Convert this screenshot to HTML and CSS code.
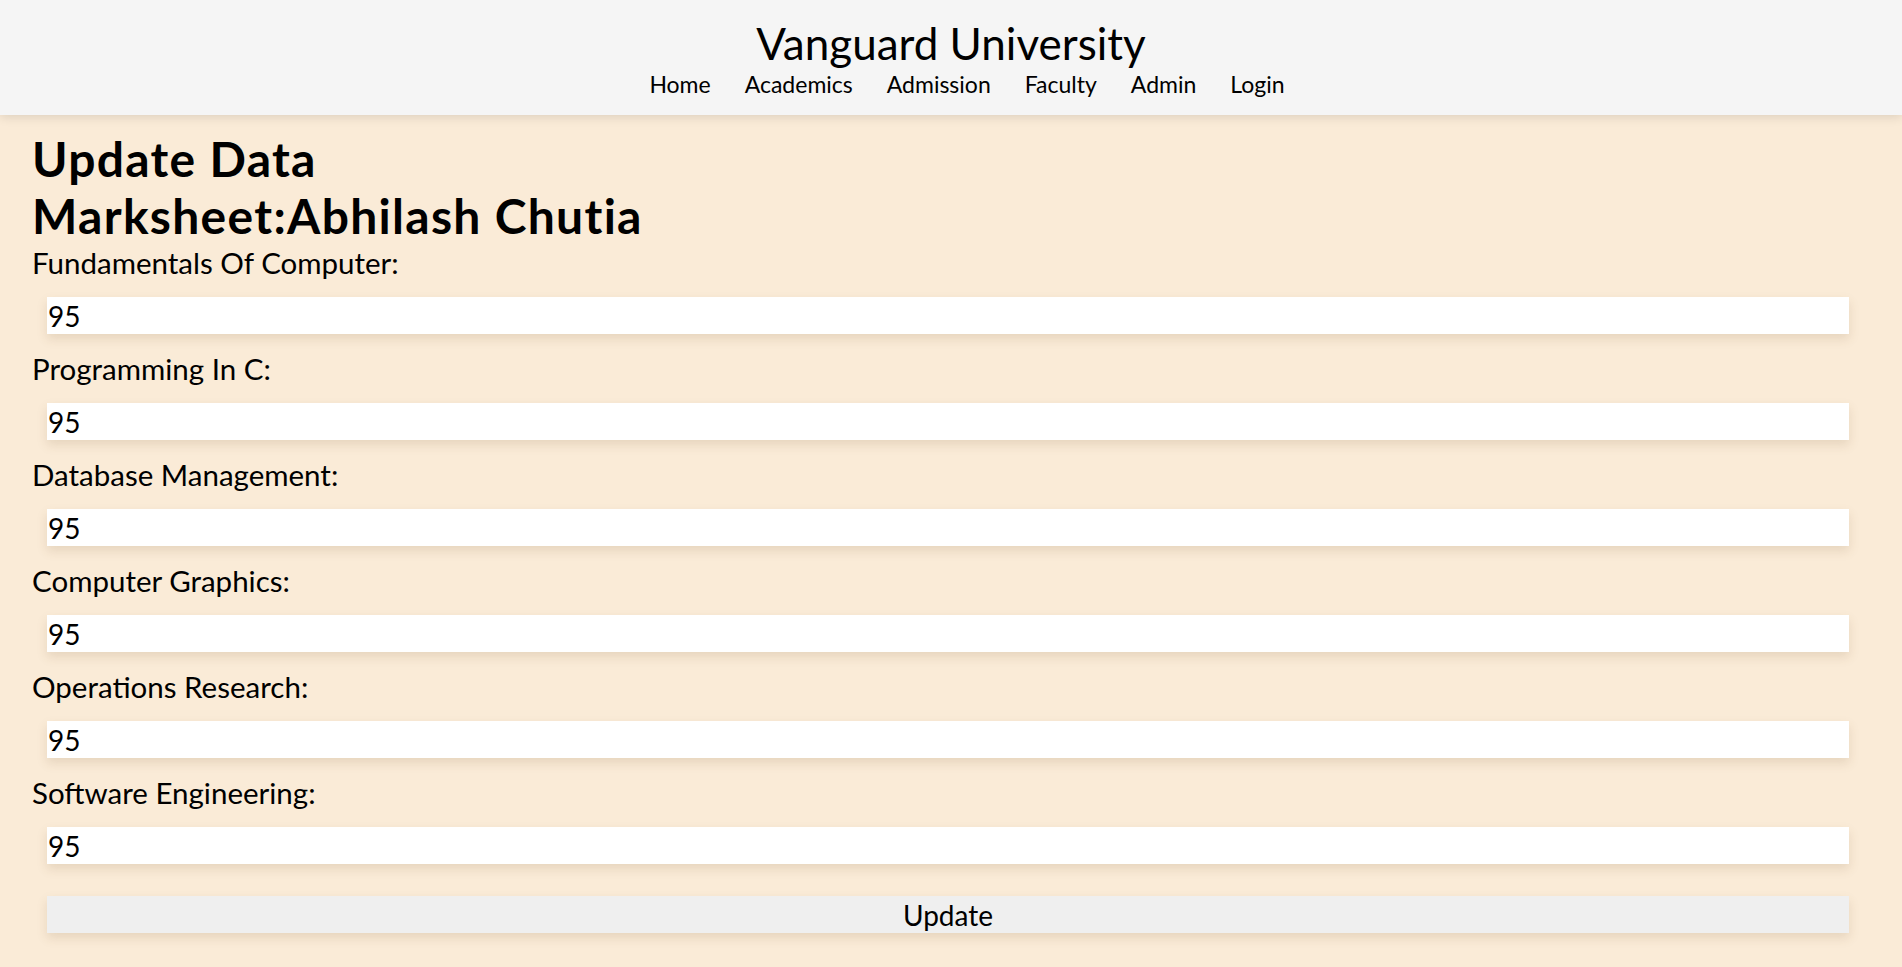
FILE: index.html
```html
<!DOCTYPE html>
<html lang="en">
<head>
<meta charset="utf-8">
<title>Update Data</title>
<link rel="stylesheet" href="styles.css">
</head>
<body>
<header class="site-header">
  <div class="brand">Vanguard University</div>
  <nav class="nav">
    <a href="#" class="nav-link">Home</a>
    <a href="#" class="nav-link">Academics</a>
    <a href="#" class="nav-link">Admission</a>
    <a href="#" class="nav-link">Faculty</a>
    <a href="#" class="nav-link">Admin</a>
    <a href="#" class="nav-link">Login</a>
  </nav>
</header>
<main class="content">
  <h1 class="title">Update Data<br>Marksheet:Abhilash Chutia</h1>
  <form class="form">
    <label class="field-label">Fundamentals Of Computer:</label>
    <input class="field-input" type="text" value="95">
    <label class="field-label">Programming In C:</label>
    <input class="field-input" type="text" value="95">
    <label class="field-label">Database Management:</label>
    <input class="field-input" type="text" value="95">
    <label class="field-label">Computer Graphics:</label>
    <input class="field-input" type="text" value="95">
    <label class="field-label">Operations Research:</label>
    <input class="field-input" type="text" value="95">
    <label class="field-label">Software Engineering:</label>
    <input class="field-input" type="text" value="95">
    <button class="submit" type="button">Update</button>
  </form>
</main>
</body>
</html>
```
FILE: styles.css
```css
* { box-sizing: border-box; }
html, body { margin: 0; padding: 0; }
body {
  background: #faebd7;
  font-family: "Lato", "Open Sans", sans-serif;
  color: #000;
  min-height: 967px;
}
.site-header {
  background: #f5f5f5;
  height: 115px;
  box-shadow: 0 2px 10px rgba(0, 0, 0, 0.12);
  display: flex;
  flex-direction: column;
  align-items: center;
  padding-top: 17px;
  position: relative;
  z-index: 1;
}
.brand {
  font-size: 44px;
  line-height: 52px;
}
.nav {
  display: flex;
  gap: 34px;
  margin-top: 1px;
  padding-left: 32px;
}
.nav-link {
  color: #000;
  text-decoration: none;
  font-size: 23px;
  line-height: 28px;
}
.content {
  padding: 15px 53px 30px 32px;
}
.title {
  margin: 0;
  font-size: 48px;
  line-height: 57px;
  font-weight: 700;
  letter-spacing: 1.3px;
}
.form {
  display: flex;
  flex-direction: column;
  margin-top: 2px;
}
.field-label {
  font-size: 29.5px;
  line-height: 34px;
}
.field-input {
  margin: 17px 0 18px 15px;
  height: 37px;
  border: none;
  background: #fff;
  padding: 0 1px;
  font-family: inherit;
  font-size: 28px;
  color: #000;
  box-shadow: 0 5px 10px rgba(120, 90, 50, 0.15);
  outline: none;
}
.submit {
  margin: 14px 0 0 15px;
  height: 37px;
  border: none;
  background: #efefef;
  font-family: inherit;
  font-size: 28px;
  color: #000;
  box-shadow: 0 5px 10px rgba(120, 90, 50, 0.15);
  padding: 0;
}
```
